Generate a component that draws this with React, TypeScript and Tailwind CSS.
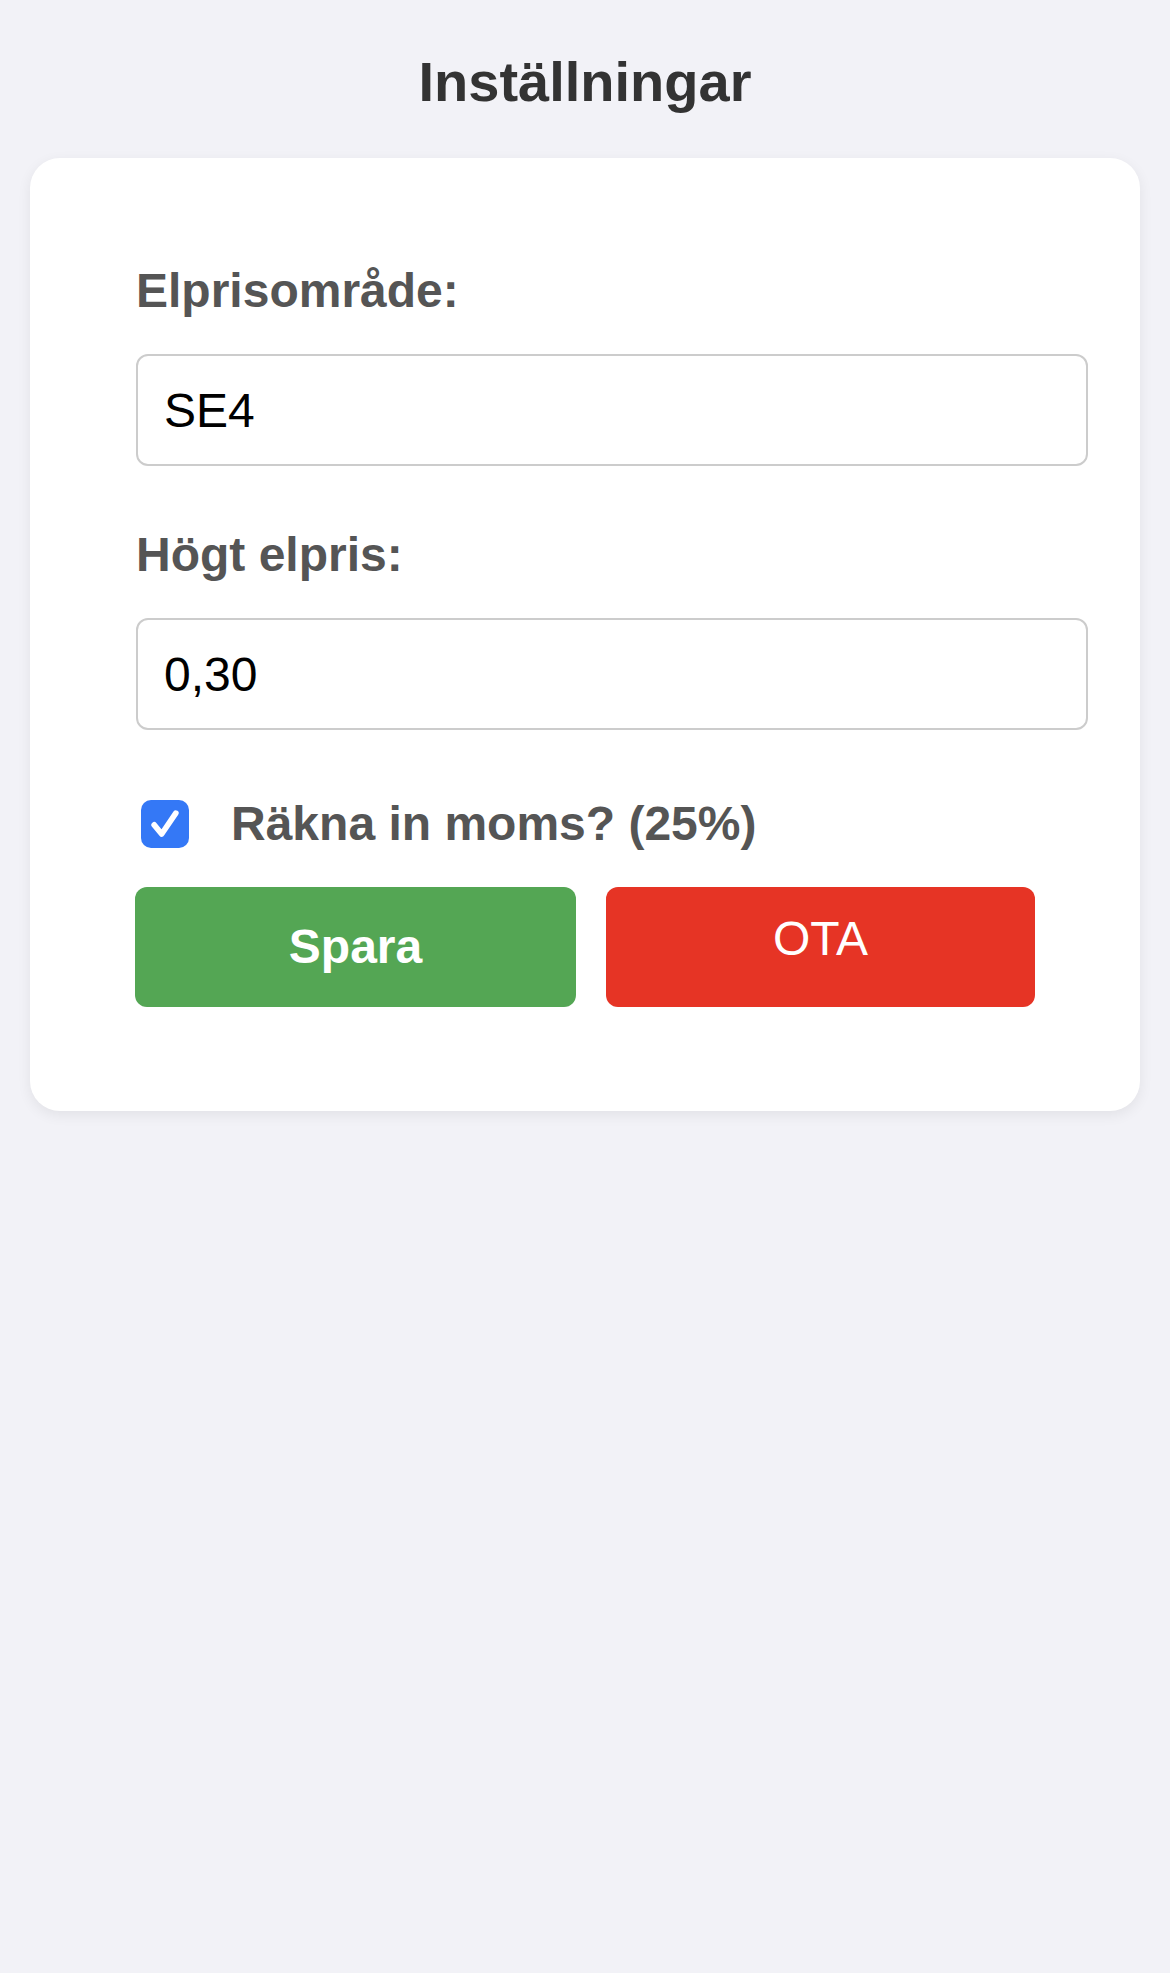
import React, { useState } from "react";

const App = () => {
  const [area, setArea] = useState("SE4");
  const [highPrice, setHighPrice] = useState("0,30");
  const [withVat, setWithVat] = useState(true);

  return (
    <div className="min-h-[1973px] bg-[#f2f2f7] font-['Liberation_Sans',Arial,sans-serif] pt-[50px]">
      <h1 className="text-center text-[56px] leading-[64px] font-bold text-[#333]">
        Inställningar
      </h1>

      <div className="mx-[30px] mt-[44px] rounded-[30px] bg-white pt-[105px] pb-[104px] pl-[106px] pr-[52px] shadow-[0_4px_14px_rgba(0,0,0,0.07)]">
        <form onSubmit={(e) => e.preventDefault()}>
          <label className="block text-[48px] leading-[56px] font-bold text-[#555] mb-[35px]">
            Elprisområde:
          </label>
          <input
            value={area}
            onChange={(e) => setArea(e.target.value)}
            className="block w-full h-[112px] rounded-[12px] border-2 border-[#ccc] bg-white px-[26px] text-[48px] text-black outline-none"
          />

          <label className="block mt-[61px] text-[48px] leading-[56px] font-bold text-[#555] mb-[35px]">
            Högt elpris:
          </label>
          <input
            value={highPrice}
            onChange={(e) => setHighPrice(e.target.value)}
            className="block w-full h-[112px] rounded-[12px] border-2 border-[#ccc] bg-white px-[26px] text-[48px] text-black outline-none"
          />

          <div className="mt-[70px] flex items-center h-[48px]">
            <button
              type="button"
              onClick={() => setWithVat(!withVat)}
              className={`ml-[5px] flex h-[48px] w-[48px] items-center justify-center rounded-[10px] ${
                withVat ? "bg-[#3478f6]" : "border-2 border-[#ccc] bg-white"
              }`}
            >
              {withVat && (
                <svg viewBox="0 0 24 24" className="h-[40px] w-[40px]" fill="none">
                  <path
                    d="M5.5 12.5l4.5 5.5L18.5 5.5"
                    stroke="white"
                    strokeWidth={3.4}
                    strokeLinecap="round"
                    strokeLinejoin="round"
                  />
                </svg>
              )}
            </button>
            <span className="ml-[42px] text-[48px] leading-[56px] font-bold text-[#555]">
              Räkna in moms? (25%)
            </span>
          </div>

          <div className="mt-[39px] flex gap-[30px]">
            <button
              type="submit"
              className="h-[120px] w-[441px] -ml-px rounded-[12px] bg-[#54a654] text-[48px] font-bold text-white"
            >
              Spara
            </button>
            <button
              type="button"
              className="h-[120px] w-[429px] rounded-[12px] bg-[#e63425] pb-[16px] text-[48px] text-white"
            >
              OTA
            </button>
          </div>
        </form>
      </div>
    </div>
  );
};

export default App;
